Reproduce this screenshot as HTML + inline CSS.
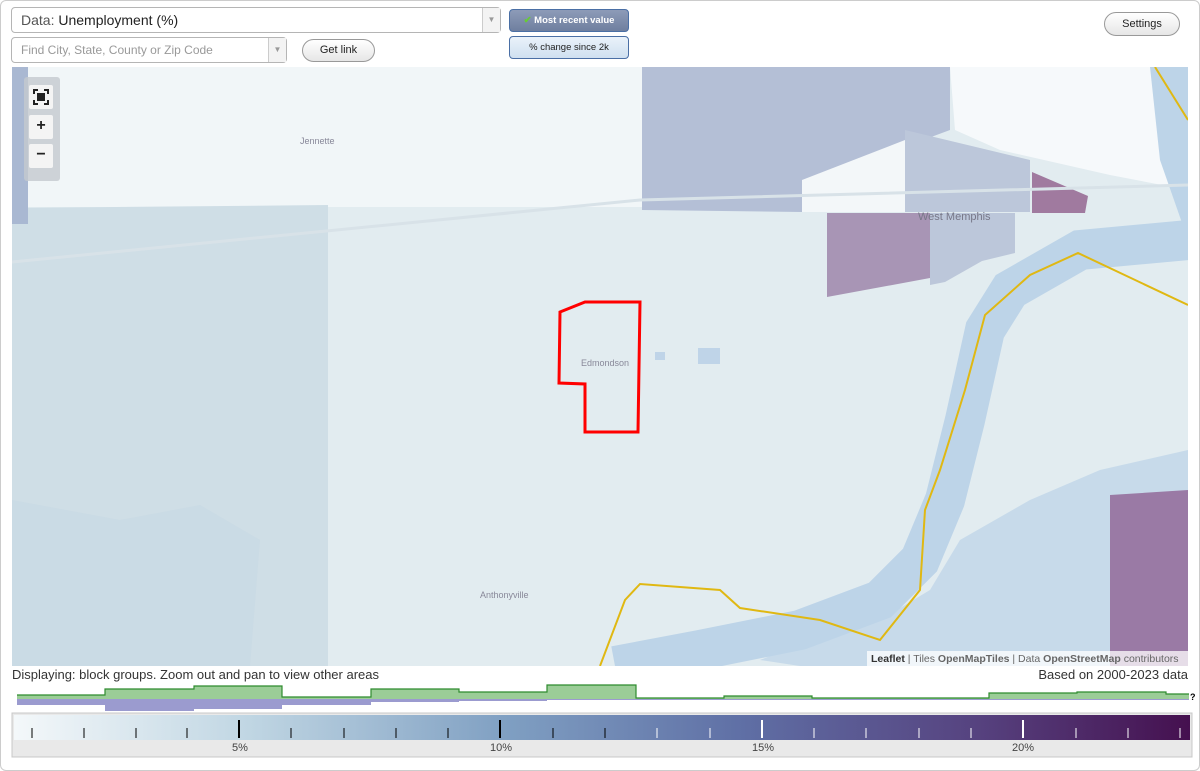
<!DOCTYPE html>
<html><head><meta charset="utf-8"><style>
*{box-sizing:border-box}
body{margin:0;width:1200px;height:771px;background:#fff;font-family:"Liberation Sans",sans-serif;overflow:hidden;position:relative}
.frame{position:absolute;left:0;top:0;width:1200px;height:771px;border:1px solid #ccc;border-radius:6px}
.sel{position:absolute;border:1px solid #b5b5b5;border-radius:4px;background:#fff;color:#555}
.arrow{position:absolute;right:0;top:0;bottom:0;width:18px;border-left:1px solid #ccc;background:#f3f3f3;color:#999;font-size:8px;text-align:center}
.btn{position:absolute;border:1px solid #999;border-radius:12px;background:linear-gradient(#fff,#e6e6e6);font-size:11px;color:#222;text-align:center}
.tb{position:absolute;border:1px solid #4a6fa5;border-radius:4px;font-size:9.5px;text-align:center}
.zb{position:absolute;left:29px;width:24px;height:24px;background:#f4f4f4;border-radius:2px;text-align:center;font-weight:bold;font-size:16px;line-height:22px;color:#222}
</style></head><body>
<div class="frame"></div>
<div class="sel" style="left:11px;top:7px;width:490px;height:26px;font-size:14px;line-height:24px;padding-left:9px">Data: <span style="color:#222">Unemployment (%)</span><div class="arrow" style="line-height:24px">▼</div></div>
<div class="sel" style="left:11px;top:37px;width:276px;height:26px;font-size:12px;line-height:24px;padding-left:9px;color:#999">Find City, State, County or Zip Code<div class="arrow" style="line-height:24px">▼</div></div>
<div class="btn" style="left:302px;top:39px;width:73px;height:23px;line-height:21px">Get link</div>
<div class="tb" style="left:509px;top:9px;width:120px;height:23px;background:linear-gradient(#8d9bb8,#6f7f9f);color:#fff;font-weight:bold;line-height:21px"><span style="color:#6c3">✔</span> Most recent value</div>
<div class="tb" style="left:509px;top:36px;width:120px;height:23px;background:linear-gradient(#eaf2fa,#cfe0f0);color:#222;line-height:21px">% change since 2k</div>
<div class="btn" style="left:1104px;top:12px;width:76px;height:24px;line-height:22px">Settings</div>

<svg style="position:absolute;left:0;top:0" width="1200" height="771">
<defs><clipPath id="c"><rect x="12" y="67" width="1176" height="599"/></clipPath>
<linearGradient id="g" x1="0" x2="1"><stop offset="0" stop-color="#f4f8fa"/><stop offset=".2" stop-color="#c0d6e3"/><stop offset=".42" stop-color="#7f9fc2"/><stop offset=".62" stop-color="#5f6fa5"/><stop offset=".82" stop-color="#56427f"/><stop offset="1" stop-color="#45104f"/></linearGradient></defs>
<g clip-path="url(#c)">
<rect x="12" y="67" width="1176" height="599" fill="#e2ecf0"/>
<rect x="12" y="67" width="630" height="140" fill="#f1f6f8"/>
<polygon points="12,208 328,205 328,666 12,666" fill="#cfdee6"/>
<rect x="12" y="67" width="16" height="157" fill="#a9b8d2"/>
<polygon points="642,67 950,67 950,130 802,185 802,212 642,210" fill="#b4bfd6"/>
<polygon points="950,67 1188,67 1188,190 1110,175 1000,150 955,130" fill="#f6f9fb"/>
<polygon points="802,180 905,140 905,212 802,212" fill="#f3f7f9"/>
<polygon points="905,130 1030,160 1030,212 905,212" fill="#bcc7da"/>
<polygon points="1032,172 1088,196 1085,213 1032,213" fill="#a07a9f"/>
<polygon points="827,213 930,213 930,278 827,297" fill="#a895b5"/>
<polygon points="930,213 1015,213 1015,253 982,261 945,282 930,285" fill="#bcc7da"/>
<polygon points="1150,67 1188,67 1188,240 1160,160" fill="#bdd4e8"/>
<polyline points="1188,240 1080,250 1010,290 985,330 965,420 945,500 920,560 880,600 800,630 700,650 615,666" fill="none" stroke="#bdd4e8" stroke-width="40"/>
<polygon points="1188,450 1100,470 1030,500 960,540 930,590 880,620 810,640 760,660 800,666 1188,666" fill="#bdd4e8" opacity=".75"/>
<polygon points="12,500 120,520 200,505 260,540 250,666 12,666" fill="#c6d8e4" opacity=".5"/>
<polygon points="1110,495 1188,490 1188,666 1110,666" fill="#9a7aa5"/>
<polyline points="1155,67 1188,120" fill="none" stroke="#e0b812" stroke-width="2"/>
<polyline points="1188,305 1078,253 1030,275 985,315 965,390 940,470 925,510 920,590 880,640 820,620 740,608 720,590 640,584 625,600 600,666" fill="none" stroke="#e0b812" stroke-width="2"/>
<polyline points="12,262 640,200 1188,185" fill="none" stroke="#d8e2e8" stroke-width="3"/>
<path d="M560,312 L585,302 L640,302 L638,432 L585,432 L585,384 L559,383 Z" fill="none" stroke="#f00" stroke-width="3"/>
<rect x="698" y="348" width="22" height="16" fill="#bfd4e8"/>
<rect x="655" y="352" width="10" height="8" fill="#bfd4e8"/>
<text x="300" y="144" font-size="9" fill="#889">Jennette</text>
<text x="918" y="220" font-size="11" fill="#778">West Memphis</text>
<text x="581" y="366" font-size="9" fill="#889">Edmondson</text>
<text x="480" y="598" font-size="9" fill="#889">Anthonyville</text>
<rect x="867" y="651" width="321" height="15" fill="rgba(255,255,255,.75)"/>
<text x="871" y="662" font-size="10.5" fill="#666"><tspan font-weight="bold" fill="#333">Leaflet</tspan> | Tiles <tspan font-weight="bold">OpenMapTiles</tspan> | Data <tspan font-weight="bold">OpenStreetMap</tspan> contributors</text>
</g>
<rect x="24" y="77" width="36" height="104" rx="3" fill="#c4c9ce" opacity=".8"/>
<text x="12" y="679" font-size="13" fill="#333" textLength="367">Displaying: block groups. Zoom out and pan to view other areas</text>
<text x="1188" y="679" font-size="13" fill="#333" text-anchor="end">Based on 2000-2023 data</text>
<path d="M17,705 L105,705 105,711 194,711 194,709 282,709 282,705 371,705 371,702 459,702 459,701 547,701 547,700 1189,700 1189,699 17,699Z" fill="#9b9bcf"/>
<path d="M17,699 L17,695 105,695 105,689 194,689 194,686 282,686 282,697 371,697 371,689 459,689 459,692 547,692 547,685 636,685 636,698 724,698 724,696 812,696 812,698 989,698 989,693 1077,693 1077,692 1166,692 1166,694 1189,694 1189,699Z" fill="#9bcd97"/>
<path d="M17,695 105,695 105,689 194,689 194,686 282,686 282,697 371,697 371,689 459,689 459,692 547,692 547,685 636,685 636,698 724,698 724,696 812,696 812,698 989,698 989,693 1077,693 1077,692 1166,692 1166,694 1189,694" fill="none" stroke="#2e8b2e" stroke-width="1.2"/>
<text x="1190" y="700" font-size="9" font-weight="bold">?</text>
<rect x="12" y="713" width="1180" height="44" fill="#e9e9e9" stroke="#c8c8c8"/>
<rect x="14" y="715" width="1176" height="25" fill="url(#g)"/>
<g stroke="#000" stroke-width="1">
<line x1="32" y1="728" x2="32" y2="738"/><line x1="84" y1="728" x2="84" y2="738"/><line x1="136" y1="728" x2="136" y2="738"/><line x1="187" y1="728" x2="187" y2="738"/>
<line x1="239" y1="720" x2="239" y2="738" stroke-width="2"/><line x1="291" y1="728" x2="291" y2="738"/><line x1="344" y1="728" x2="344" y2="738"/><line x1="396" y1="728" x2="396" y2="738"/><line x1="448" y1="728" x2="448" y2="738"/>
<line x1="500" y1="720" x2="500" y2="738" stroke-width="2"/><line x1="553" y1="728" x2="553" y2="738"/><line x1="605" y1="728" x2="605" y2="738"/>
</g>
<g stroke="#fff" stroke-width="1">
<line x1="657" y1="728" x2="657" y2="738"/><line x1="710" y1="728" x2="710" y2="738"/><line x1="762" y1="720" x2="762" y2="738" stroke-width="2"/><line x1="814" y1="728" x2="814" y2="738"/><line x1="866" y1="728" x2="866" y2="738"/><line x1="919" y1="728" x2="919" y2="738"/><line x1="971" y1="728" x2="971" y2="738"/><line x1="1023" y1="720" x2="1023" y2="738" stroke-width="2"/><line x1="1076" y1="728" x2="1076" y2="738"/><line x1="1128" y1="728" x2="1128" y2="738"/><line x1="1180" y1="728" x2="1180" y2="738"/>
</g>
<g font-size="11" fill="#444" text-anchor="middle"><text x="240" y="751">5%</text><text x="501" y="751">10%</text><text x="763" y="751">15%</text><text x="1023" y="751">20%</text></g>
</svg>
<div class="zb" style="top:85px"><svg width="16" height="16" style="margin-top:4px"><rect x="4" y="4" width="8" height="8" fill="#222"/><path d="M1,5V1H5M11,1H15V5M15,11V15H11M5,15H1V11" stroke="#222" fill="none" stroke-width="2"/></svg></div>
<div class="zb" style="top:115px">+</div>
<div class="zb" style="top:144px">−</div>
</body></html>
